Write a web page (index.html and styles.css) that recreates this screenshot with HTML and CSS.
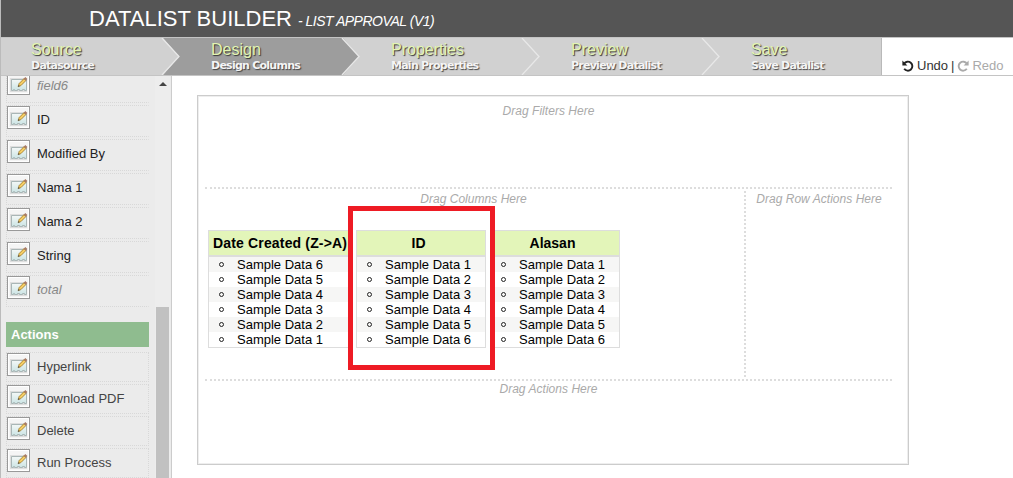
FILE: index.html
```html
<!DOCTYPE html>
<html lang="en">
<head>
<meta charset="utf-8">
<title>Datalist Builder</title>
<link rel="stylesheet" href="styles.css">
</head>
<body>
<svg class="defs" width="0" height="0">
  <defs>
    <linearGradient id="sheet" x1="0" y1="0" x2="0" y2="1"><stop offset="0" stop-color="#f4f8f7"/><stop offset="1" stop-color="#cbe4e4"/></linearGradient>
    <symbol id="edit" viewBox="0 0 19 19">
      <path d="M0 0h19v19H0z" fill="#f5f5f5"/>
      <path d="M1 4h17v14H1z" fill="#dedede"/>
      <path d="M2.5 5.5h15v11h-2v-1h-2v1h-3v-1h-2v1h-3v-1h-1v1h-2z" fill="url(#sheet)" stroke="#a9b6b6"/>
      <path d="M9 12.8l1-3.2 5-5 2 2-5 5z" fill="#eab83f" stroke="#8c7137" stroke-width=".6"/>
      <path d="M11 10.6l4.8-4.8" stroke="#ffe590"/>
      <path d="M14.6 4.8l1.8-1.8 2 2-1.8 1.8z" fill="#a87c66"/>
      <path d="M9 12.8l.6-1.7 1.1 1.1z" fill="#444"/>
    </symbol>
  </defs>
</svg>
<div class="app">
  <header class="top"><h1>DATALIST BUILDER</h1><em>- LIST APPROVAL (V1)</em></header>
  <nav class="steps">
    <div class="step"><b>Source</b><span>Datasource</span></div>
    <div class="step active"><b>Design</b><span>Design Columns</span></div>
    <div class="step"><b>Properties</b><span>Main Properties</span></div>
    <div class="step"><b>Preview</b><span>Preview Datalist</span></div>
    <div class="step last"><b>Save</b><span>Save Datalist</span></div>
    <svg class="arrows" width="880" height="37" viewBox="0 0 880 37">
      <path d="M160 0h2l16 18.5L162 37h-2z" fill="#d1d1d1"/>
      <path d="M340 0h2l16 18.5L342 37h-2z" fill="#9d9d9d"/>
      <path d="M161 0l17 18.5L161 37M341 0l17 18.5L341 37M521 0l17 18.5L521 37M701 0l17 18.5L701 37" fill="none" stroke="#e8e8e8" stroke-width="1.3"/>
    </svg>
    <div class="history">
      <svg width="12" height="12" viewBox="0 0 12 12"><path d="M2.1 3.7A4.5 4.5 0 1 1 2.2 8.8" fill="none" stroke="#222" stroke-width="1.9"/><path d="M.4.4v5h5z" fill="#222"/></svg>
      <span class="undo">Undo</span><span class="bar">|</span>
      <svg width="12" height="12" viewBox="0 0 12 12"><path d="M9.9 3.7A4.5 4.5 0 1 0 9.8 8.8" fill="none" stroke="#aaa" stroke-width="1.9"/><path d="M11.6.4v5h-5z" fill="#aaa"/></svg>
      <span class="redo">Redo</span>
    </div>
  </nav>
  <div class="main">
    <aside class="side">
      <div class="palette">
        <div class="fields">
          <div class="item off"><svg><use href="#edit"/></svg>field6</div>
          <div class="item"><svg><use href="#edit"/></svg>ID</div>
          <div class="item"><svg><use href="#edit"/></svg>Modified By</div>
          <div class="item"><svg><use href="#edit"/></svg>Nama 1</div>
          <div class="item"><svg><use href="#edit"/></svg>Nama 2</div>
          <div class="item"><svg><use href="#edit"/></svg>String</div>
          <div class="item off"><svg><use href="#edit"/></svg>total</div>
        </div>
        <h2>Actions</h2>
        <div class="actions">
          <div class="item"><svg><use href="#edit"/></svg>Hyperlink</div>
          <div class="item"><svg><use href="#edit"/></svg>Download PDF</div>
          <div class="item"><svg><use href="#edit"/></svg>Delete</div>
          <div class="item"><svg><use href="#edit"/></svg>Run Process</div>
        </div>
      </div>
      <div class="scroll"><i class="up"></i><i class="thumb"></i></div>
    </aside>
    <section class="canvas">
      <div class="filters hint">Drag Filters Here</div>
      <div class="middle">
        <div class="columns">
          <div class="hint">Drag Columns Here</div>
          <div class="lists">
            <div class="col wide"><h3>Date Created (Z-&gt;A)</h3><ul><li>Sample Data 6</li><li>Sample Data 5</li><li>Sample Data 4</li><li>Sample Data 3</li><li>Sample Data 2</li><li>Sample Data 1</li></ul></div>
            <div class="col marked"><h3>ID</h3><ul><li>Sample Data 1</li><li>Sample Data 2</li><li>Sample Data 3</li><li>Sample Data 4</li><li>Sample Data 5</li><li>Sample Data 6</li></ul></div>
            <div class="col"><h3>Alasan</h3><ul><li>Sample Data 1</li><li>Sample Data 2</li><li>Sample Data 3</li><li>Sample Data 4</li><li>Sample Data 5</li><li>Sample Data 6</li></ul></div>
          </div>
        </div>
        <div class="rowactions hint">Drag Row Actions Here</div>
      </div>
      <div class="footer hint">Drag Actions Here</div>
    </section>
  </div>
</div>
</body>
</html>
```
FILE: styles.css
```css
*, *::before, *::after { box-sizing: border-box; }
body { margin: 0; font-family: "Liberation Sans", Arial, sans-serif; font-size: 13px; background: #fff; color: #000; }
h1, h2, h3, ul { margin: 0; padding: 0; font-weight: normal; }
.defs { display: block; }
.app { width: 1013px; height: 478px; display: flex; flex-direction: column; overflow: hidden; border-left: 1px solid #bbb; }
.top { flex: 0 0 37px; background: #555; color: #fff; padding-left: 88px; display: flex; align-items: baseline; gap: 6px; white-space: nowrap; }
.top h1 { font-size: 22px; line-height: 37px; }
.top em { font-size: 14px; letter-spacing: -.5px; }
.steps { flex: 0 0 39px; display: flex; position: relative; border-top: 1px solid #c4c4c4; border-bottom: 1px solid #c4c4c4; }
.step { width: 180px; background: #d1d1d1; padding: 3px 0 0 30px; display: flex; flex-direction: column; white-space: nowrap; }
.step:first-child { width: 161px; }
.step.active { background: #9d9d9d; padding-left: 49px; }
.step.active ~ .step { padding-left: 49px; }
.step.last { border-right: 1px solid #b9b9b9; }
.step b { font-weight: normal; font-size: 16px; line-height: 18px; color: #e3f5b2; text-shadow: 1px 1px 1px #333; }
.step span { font: bold 11px/13px "DejaVu Sans", sans-serif; letter-spacing: -.75px; color: #f5f5f5; text-shadow: 1px 1px 1px #444; }
.arrows { position: absolute; left: 0; top: 0; }
.history { flex: 1; display: flex; align-items: center; padding: 18px 0 0 20px; white-space: nowrap; color: #333; }
.undo { margin-left: 3px; }
.bar { margin: 0 3px; }
.redo { margin-left: 3px; color: #aaa; }
.main { flex: 1; display: flex; min-height: 0; }
.side { width: 171px; background: #ebebeb; border-right: 1px solid #ccc; display: flex; overflow: hidden; }
.palette { width: 148px; padding-left: 5px; margin-top: -5px; flex: none; }
.fields, .actions { display: flex; flex-direction: column; gap: 2px; }
.item { height: 32px; border: 1px dotted #d8d8d8; display: flex; flex: none; white-space: nowrap; color: #222; gap: 7px; }
.fields .item { border-right-color: transparent; line-height: 28px; }
.actions .item { height: 30px; color: #444; line-height: 27px; }
.item svg { width: 23px; height: 23px; padding: 1px; border: 1px solid #999; background: #fff; flex: none; }
.fields .item.off { color: #888; font-style: italic; }
.palette h2 { margin: 15px 0 5px; height: 25px; padding-left: 5px; background: #8fbc8f; color: #fff; font-size: 13px; line-height: 25px; font-weight: bold; }
.scroll { width: 15px; margin-left: 6px; background: #ededed; display: flex; flex-direction: column; padding-left: 1px; }
.up { width: 0; height: 0; margin: 6px 0 0 3px; border: 4px solid transparent; border-top: 0; border-bottom-color: #444; }
.thumb { width: 13px; flex: 1; margin-top: 221px; background: #c1c1c1; }
.canvas { width: 712px; height: 370px; margin: 19px 0 0 25px; border: 1px solid #ccc; box-shadow: inset 0 0 0 1px #eee; padding: 7px 16px 0 7px; display: flex; flex-direction: column; }
.hint { color: #aaa; font-size: 12px; font-style: italic; text-align: center; line-height: 16px; white-space: nowrap; letter-spacing: .03px; }
.filters { height: 86px; border-bottom: 2px dotted #ddd; }
.middle { height: 192px; display: flex; border-bottom: 2px dotted #ddd; padding: 2px 0; }
.columns { width: 541px; padding-right: 2px; border-right: 2px dotted #ddd; }
.rowactions { flex: 1; }
.footer { height: 80px; }
.lists { display: flex; gap: 4px; padding: 23px 0 0 3px; }
.col { width: 130px; height: 118px; border: 1px solid #ddd; position: relative; }
.col.wide { width: 144px; }
.col h3 { height: 26px; background: #e3f5b9; border-bottom: 2px solid #ddd; font-size: 14px; line-height: 25px; font-weight: bold; padding-left: 4px; white-space: nowrap; }
.col.wide h3 { letter-spacing: .16px; }
.col:not(.wide) h3 { text-align: center; padding: 0 5px 0 0; }
.col li { list-style: none; height: 15px; line-height: 15px; display: flex; align-items: center; gap: 13px; padding-left: 10px; white-space: nowrap; }
.col li:nth-child(odd) { background: #f6f6f5; }
.col li::before { content: ""; width: 5px; height: 5px; border: 1px solid #222; border-radius: 50%; flex: none; }
.marked::after { content: ""; position: absolute; z-index: 1; left: -9px; top: -25px; width: 147px; height: 164px; border: 5px solid #ee1b24; }
```
